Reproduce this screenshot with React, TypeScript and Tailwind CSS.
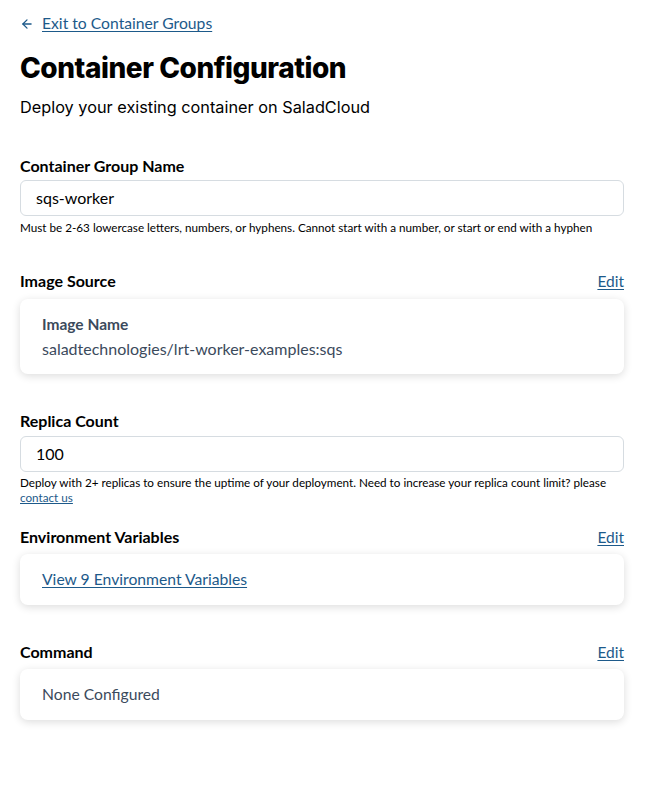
import { ArrowLeft } from "lucide-react";

const lato = { fontFamily: "Lato, 'Open Sans', sans-serif" };
const inter = { fontFamily: "Inter, sans-serif" };

const SectionHeader = ({ title, edit }: { title: string; edit?: boolean }) => (
    <div className="flex h-5 items-center justify-between">
        <h3 className="text-[16px] font-bold leading-5 text-black">{title}</h3>
        {edit && (
            <a href="#" className="text-[15.5px] leading-5 text-[#1d5a8a] underline underline-offset-2">
                Edit
            </a>
        )}
    </div>
);

const Card = ({ children, className = "" }: { children: React.ReactNode; className?: string }) => (
    <div className={`rounded-lg bg-white px-[22px] shadow-[0_2px_8px_rgba(0,0,0,0.14)] ${className}`}>
        {children}
    </div>
);

export default function App() {
    return (
        <div className="min-h-[789px] bg-white px-5 pt-[14px] text-black" style={lato}>
            <a href="#" className="flex h-5 items-center gap-[8px] text-[15.7px] text-[#1d5a8a]">
                <ArrowLeft size={14} strokeWidth={2.2} />
                <span className="underline underline-offset-2">Exit to Container Groups</span>
            </a>
            <h1 className="mt-[16px] text-[28px] font-extrabold leading-[36px] tracking-[-0.45px]" style={inter}>
                Container Configuration
            </h1>
            <p className="mt-[9px] text-[16.3px] leading-6" style={inter}>
                Deploy your existing container on SaladCloud
            </p>

            <div className="w-[604px]">
                <div className="mt-[37px]">
                    <SectionHeader title="Container Group Name" />
                </div>
                <div className="mt-[4px] flex h-9 items-center rounded-md border border-[#d6dce1] px-[15px] text-[16px]">
                    sqs-worker
                </div>
                <p className="mt-[4px] text-[11.7px] leading-[14px]">
                    Must be 2-63 lowercase letters, numbers, or hyphens. Cannot start with a number, or start or end with a hyphen
                </p>

                <div className="mt-[37px]">
                    <SectionHeader title="Image Source" edit />
                </div>
                <Card className="mt-[8px] pt-[15px] pb-[15px]">
                    <p className="text-[15.5px] font-bold leading-5 text-[#3b4a5c]">Image Name</p>
                    <p className="mt-[5px] text-[16px] leading-5 text-[#3b4a5c]">saladtechnologies/lrt-worker-examples:sqs</p>
                </Card>

                <div className="mt-[37px]">
                    <SectionHeader title="Replica Count" />
                </div>
                <div className="mt-[5px] flex h-9 items-center rounded-md border border-[#d6dce1] px-[15px] text-[16px]">
                    100
                </div>
                <p className="mt-[3px] text-[11.7px] leading-[15px]">
                    Deploy with 2+ replicas to ensure the uptime of your deployment. Need to increase your replica count
                    limit? please <br />
                    <a href="#" className="text-[#1d5a8a] underline">contact us</a>
                </p>

                <div className="mt-[22px]">
                    <SectionHeader title="Environment Variables" edit />
                </div>
                <Card className="mt-[7px] flex h-[51px] items-center">
                    <a href="#" className="text-[15.7px] text-[#1d5a8a] underline underline-offset-2">
                        View 9 Environment Variables
                    </a>
                </Card>

                <div className="mt-[37px]">
                    <SectionHeader title="Command" edit />
                </div>
                <Card className="mt-[7px] flex h-[51px] items-center text-[15.7px] text-[#3b4a5c]">
                    None Configured
                </Card>
            </div>
        </div>
    );
}
